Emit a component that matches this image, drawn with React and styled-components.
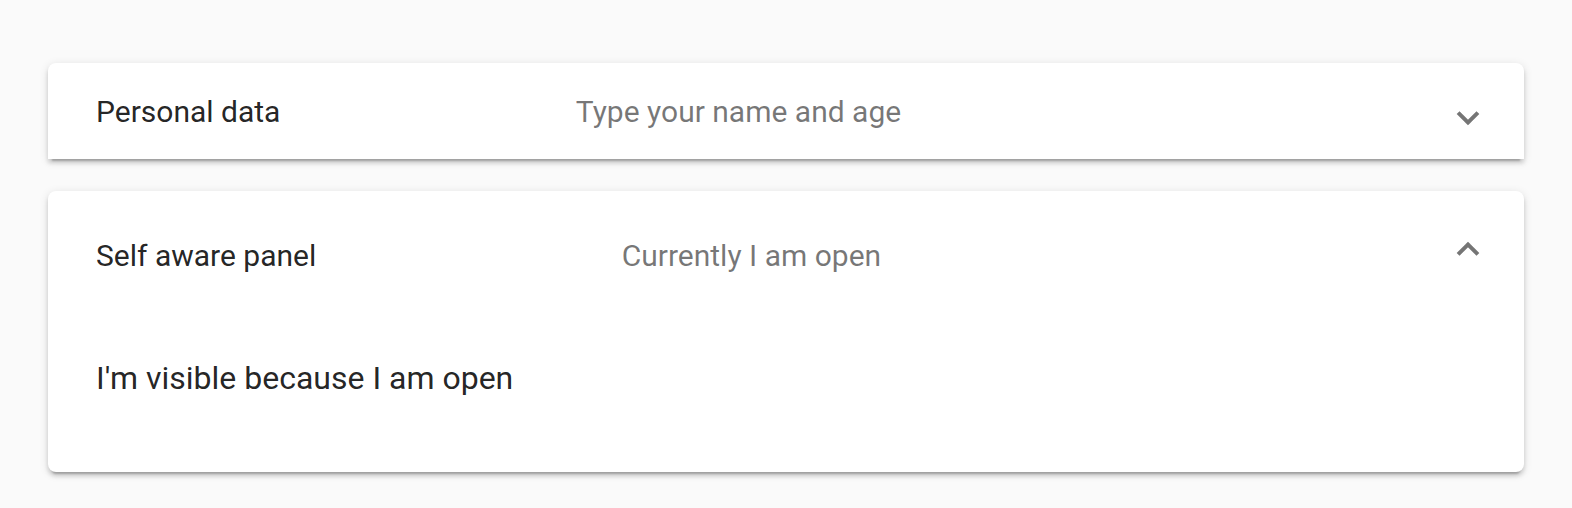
import React from "react";
import styled, {createGlobalStyle} from "styled-components";

const GlobalStyle = createGlobalStyle`
    html, body {
        margin: 0;
        padding: 0;
        background: #fafafa;
    }
    body {
        font-family: Roboto, "Helvetica Neue", sans-serif;
    }
`

const panels = [
    {
        title: "Personal data",
        description: "Type your name and age",
        open: false
    },
    {
        title: "Self aware panel",
        description: "Currently I am open",
        open: true,
        body: "I'm visible because I am open"
    }
];

const App = () => {
    return (
        <>
            <GlobalStyle/>
            <Accordion>
                {
                    panels.map(panel => (
                        <Panel key={panel.title} open={panel.open}>
                            <Header open={panel.open}>
                                <Title>{panel.title}</Title>
                                <Description>{panel.description}</Description>
                                <Indicator open={panel.open}/>
                            </Header>
                            {
                                panel.open
                                    ? <Body>{panel.body}</Body>
                                    : null
                            }
                        </Panel>
                    ))
                }
            </Accordion>
        </>
    );
}

export default App;

const Accordion = styled.div`
    display: flex;
    flex-direction: column;
    gap: 32px;
    padding: 63px 48px 40px;
`

const Panel = styled.div`
    background: #fff;
    color: rgba(0, 0, 0, .87);
    border-radius: ${p => p.open ? "8px" : "8px 8px 0 0"};
    box-shadow: 0 6px 2px -4px rgba(0, 0, 0, .2),
                0 4px 4px 0 rgba(0, 0, 0, .14),
                0 2px 10px 0 rgba(0, 0, 0, .12);
    overflow: hidden;
`

const Header = styled.div`
    display: flex;
    align-items: center;
    height: ${p => p.open ? "128px" : "96px"};
    padding: 0 48px;
    font-size: 30px;
`

const Title = styled.div`
    flex-grow: 1;
    margin-right: 32px;
    color: rgba(0, 0, 0, .87);
`

const Description = styled.div`
    flex-grow: 2;
    margin-right: 32px;
    color: rgba(0, 0, 0, .54);
`

// the chevron: two borders of a small box, turned
const Indicator = styled.span`
    display: block;
    flex: none;
    width: 16px;
    height: 16px;
    box-sizing: border-box;
    border-style: solid;
    border-color: rgba(0, 0, 0, .54);
    border-width: 0 4px 4px 0;
    transform: ${p => p.open
        ? "translateY(-2px) rotate(225deg)"
        : "translateY(3px) rotate(45deg)"};
`

const Body = styled.div`
    padding: 39px 48px 74px;
    font-size: 32px;
    line-height: 40px;
    color: rgba(0, 0, 0, .87);
`
